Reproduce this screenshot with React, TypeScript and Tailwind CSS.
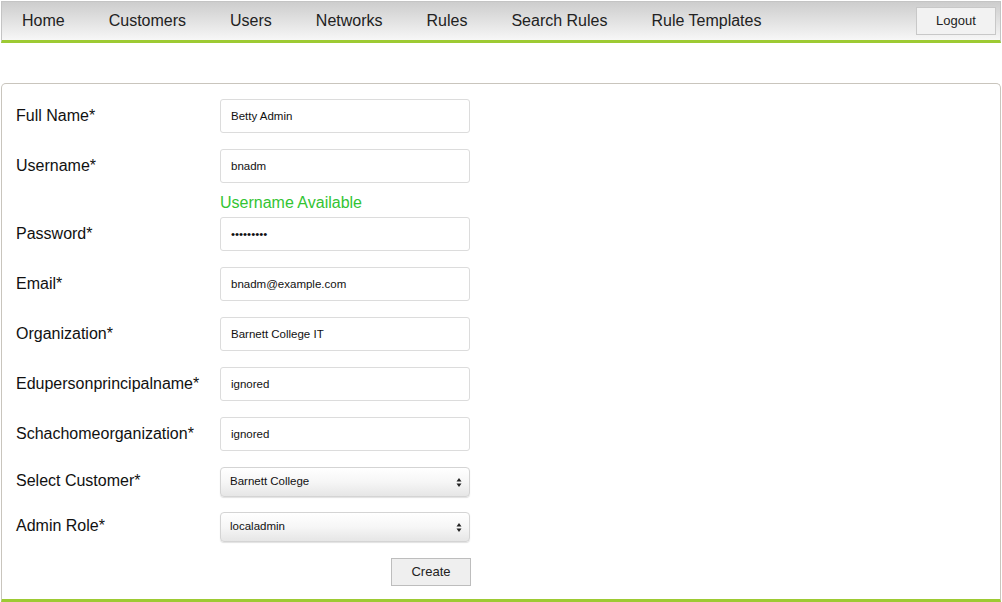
import React from 'react';

const NAV_ITEMS = ['Home', 'Customers', 'Users', 'Networks', 'Rules', 'Search Rules', 'Rule Templates'];

interface FieldProps {
  label: string;
  value: string;
  type?: string;
}

const TextRow = ({ label, value, type = 'text' }: FieldProps) => (
  <div className="flex items-center h-[34px]">
    <label className="w-[204px] text-[16px] text-[#111]">{label}</label>
    <input
      type={type}
      value={value}
      readOnly
      className="w-[250px] h-[34px] border border-[#dcdcdc] rounded-[3px] bg-white px-[10px] text-[11.5px] text-[#111] outline-none"
    />
  </div>
);

const SelectRow = ({ label, value }: FieldProps) => (
  <div className="flex items-center h-[30px]">
    <label className="w-[204px] text-[16px] text-[#111] -mt-[2px]">{label}</label>
    <div className="relative w-[250px] h-[30px] rounded-[4px] border border-[#d4d4d4] bg-gradient-to-b from-[#ffffff] via-[#f6f6f6] to-[#e6e6e6] shadow-[0_1px_1px_rgba(0,0,0,0.12)] flex items-center px-[9px] text-[11.5px] text-[#111]">
      <span>{value}</span>
      <svg className="absolute right-[7px] top-[9px]" width="6" height="11" viewBox="0 0 6 11">
        <path d="M3 1 L5.5 4.5 L0.5 4.5 Z" fill="#222" />
        <path d="M3 10 L5.5 6.5 L0.5 6.5 Z" fill="#222" />
      </svg>
    </div>
  </div>
);

export default function App() {
  return (
    <div className="w-[1002px] h-[602px] bg-white overflow-hidden font-['Liberation_Sans',Arial,sans-serif]">
      <div className="pt-px px-px">
        <nav className="h-[42px] flex items-center border-l border-r border-t border-[#c4c4c4] border-b-[3px] border-b-[#9dca33] bg-gradient-to-b from-[#cdcdcd] to-[#f7f7f7]">
          <ul className="flex items-center flex-1 -ml-[2px]">
            {NAV_ITEMS.map((item) => (
              <li key={item} className="px-[22px] text-[16px] text-[#222]">
                {item}
              </li>
            ))}
          </ul>
          <button className="mr-[4px] w-[80px] h-[28px] bg-[#f2f2f2] border border-[#c8c8c8] text-[13px] text-[#222]">
            Logout
          </button>
        </nav>
      </div>

      <div className="mt-[40px] px-px">
        <div className="h-[519px] border border-[#c9c5bd] border-b-[3px] border-b-[#9dca33] rounded-t-[5px] pl-[14px] pt-[15px]">
          <div className="flex flex-col gap-[16px]">
            <TextRow label="Full Name*" value="Betty Admin" />
            <div className="flex flex-col">
              <TextRow label="Username*" value="bnadm" />
              <div className="h-[34px] pl-[204px] pt-[5px] flex items-center text-[16px] text-[#33c433]">
                Username Available
              </div>
              <TextRow label="Password*" value="123456789" type="password" />
            </div>
            <TextRow label="Email*" value="bnadm@example.com" />
            <TextRow label="Organization*" value="Barnett College IT" />
            <TextRow label="Edupersonprincipalname*" value="ignored" />
            <TextRow label="Schachomeorganization*" value="ignored" />
          </div>
          <div className="mt-[16px] flex flex-col gap-[15px]">
            <SelectRow label="Select Customer*" value="Barnett College" />
            <SelectRow label="Admin Role*" value="localadmin" />
          </div>
          <div className="mt-[16px] w-[455px] flex justify-end">
            <button className="w-[80px] h-[28px] bg-[#efefef] border border-[#bdbdbd] text-[13px] text-[#222]">
              Create
            </button>
          </div>
        </div>
      </div>
    </div>
  );
}
